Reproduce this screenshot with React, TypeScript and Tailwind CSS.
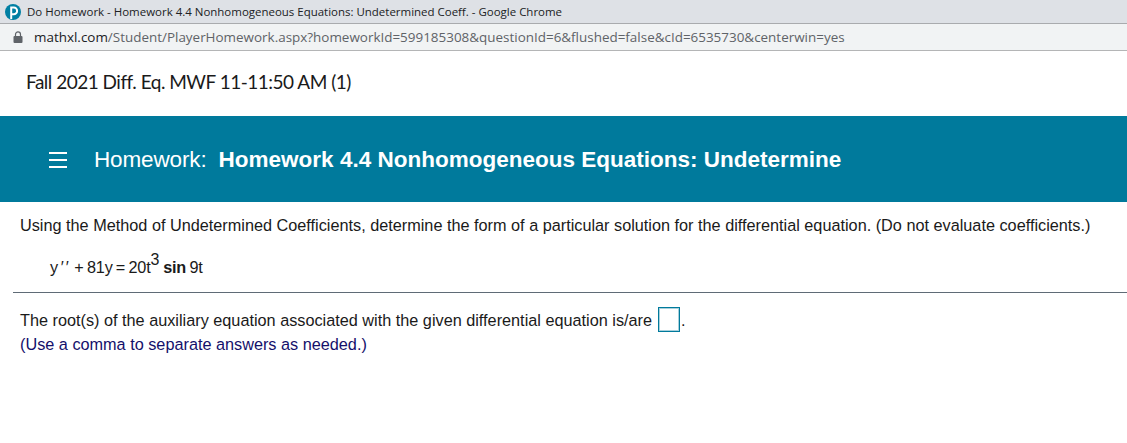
const sans = "font-['Liberation_Sans',Arial,sans-serif]";

function PearsonLogo() {
  return (
    <svg viewBox="0 0 16 16" className="h-[16px] w-[16px] shrink-0">
      <circle cx="8" cy="8" r="8" fill="#007fa3" />
      <path
        d="M6.2 15V3.6h2.6a3.3 3.3 0 0 1 0 6.6H6.2"
        fill="none"
        stroke="#fff"
        strokeWidth="2"
      />
    </svg>
  );
}

function LockIcon() {
  return (
    <svg viewBox="0 0 10 12" className="h-[12px] w-[10px] shrink-0">
      <path d="M2.5 5V3.4a2.5 2.5 0 0 1 5 0V5" fill="none" stroke="#5f6368" strokeWidth="1.2" />
      <rect x="0.5" y="5" width="9" height="7" rx="1" fill="#5f6368" />
    </svg>
  );
}

function ChromeBars() {
  return (
    <div>
      <div className="flex h-[24px] items-center gap-[6px] border-b border-[#a9abae] bg-[#dee1e6] pl-[5px]">
        <PearsonLogo />
        <span className="font-['Open_Sans',sans-serif] text-[11.47px] text-[#202124]">
          Do Homework - Homework 4.4 Nonhomogeneous Equations: Undetermined Coeff. - Google Chrome
        </span>
      </div>
      <div className="flex h-[27px] items-center gap-[11px] border-b border-[#b4b5b6] bg-[#f1f3f4] pl-[13px]">
        <LockIcon />
        <span className="font-['Open_Sans',sans-serif] text-[13.45px] text-[#5f6368]">
          <span className="text-[#202124]">mathxl.com</span>
          /Student/PlayerHomework.aspx?homeworkId=599185308&questionId=6&flushed=false&cId=6535730&centerwin=yes
        </span>
      </div>
    </div>
  );
}

function Banner() {
  return (
    <div className="flex h-[86px] items-center bg-[#007a9c] pl-[49px] text-white">
      <div className="flex w-[18px] flex-col gap-[5px] pt-[1px]">
        <div className="h-[2px] bg-white" />
        <div className="h-[2px] bg-white" />
        <div className="h-[2px] bg-white" />
      </div>
      <div className={`ml-[27px] whitespace-nowrap pt-[1px] text-[22.5px] tracking-[-0.13px] ${sans}`}>
        Homework:
        <span className="ml-[12px] font-bold tracking-normal">
          Homework 4.4 Nonhomogeneous Equations: Undetermine
        </span>
      </div>
    </div>
  );
}

export default function App() {
  return (
    <div className="h-[443px] w-[1127px] overflow-hidden bg-white">
      <ChromeBars />
      <div className="flex h-[65px] items-center pb-[3px] pl-[26px] font-['Lato',sans-serif] text-[19px] tracking-[-0.5px] text-[#1a1a1a]">
        Fall 2021 Diff. Eq. MWF 11-11:50 AM (1)
      </div>
      <Banner />
      <div className={`text-[16.25px] text-[#1a1a1a] ${sans}`}>
        <p className="mt-[13px] pl-[20px] leading-[20px]">
          Using the Method of Undetermined Coefficients, determine the form of a particular solution for the differential equation. (Do not evaluate coefficients.)
        </p>
        <p className="mt-[21px] pl-[50px] leading-[22px] tracking-[-0.2px] [word-spacing:-1px]">
          y<span className="ml-[2px] mr-[1px] italic tracking-[2px]">&#8242;&#8242;</span> + 81y = 20t
          <sup className="text-[16px] leading-none">3</sup>
          <span className="ml-[4px] font-bold">sin</span> 9t
        </p>
        <div className="mt-[14px] ml-[13px] h-px bg-[#5f6b76]" />
        <div className="mt-[14px] flex items-center pl-[20px] leading-[24px]">
          The root(s) of the auxiliary equation associated with the given differential equation is/are
          <span className="ml-[6px] h-[25px] w-[22px] border border-[#007a9c] shadow-[inset_0_0_0_1px_#a8d0dc]" />
          <span className="ml-[1px]">.</span>
        </div>
        <p className="mt-[1px] pl-[20px] leading-[22px] text-[#14106b]">
          (Use a comma to separate answers as needed.)
        </p>
      </div>
    </div>
  );
}
